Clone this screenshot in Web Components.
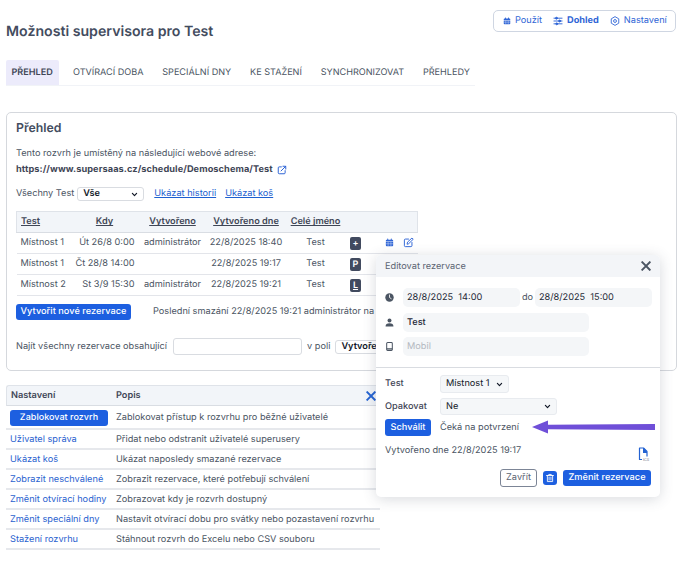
<!DOCTYPE html>
<html lang="cs"><head><meta charset="utf-8"><title>Možnosti supervisora</title>
<style>
html,body{margin:0;padding:0;background:#fff}
body{width:682px;height:566px;overflow:hidden;font:9.2px/1.2 Inter,"Liberation Sans",sans-serif;color:#4b5563;position:relative;text-rendering:geometricPrecision}
</style></head><body>
<sv-page></sv-page>
<script>
const IC={
cal:'<svg viewBox="0 0 16 16" width="W" height="W" fill="currentColor"><rect x="4" y="1" width="1.8" height="3" rx=".6"/><rect x="10.2" y="1" width="1.8" height="3" rx=".6"/><path d="M3 3h10a1.5 1.5 0 0 1 1.5 1.5V6h-13V4.500A1.500 1.500 0 0 1 3 3z"/><path d="M1.500 7h13v6A1.500 1.500 0 0 1 13 14.500H3A1.500 1.500 0 0 1 1.500 13z"/><path d="M1.500 10.300h13" stroke="#fff" stroke-width=".7"/><path d="M5.500 7v7.500M10.500 7v7.500" stroke="#fff" stroke-width=".7"/></svg>',
sliders:'<svg viewBox="0 0 16 16" width="W" height="W" fill="none" stroke="currentColor" stroke-width="1.500" stroke-linecap="round"><path d="M1.500 3.500h13M1.500 8h13M1.500 12.500h13"/><circle cx="5.500" cy="3.500" r="1.500" fill="currentColor"/><circle cx="10.500" cy="8" r="1.500" fill="currentColor"/><circle cx="6" cy="12.500" r="1.500" fill="currentColor"/></svg>',
gear:'<svg viewBox="0 0 16 16" width="W" height="W" fill="none" stroke="currentColor" stroke-width="1.400"><path d="M8 1l6 3.500v7L8 15l-6-3.500v-7z" stroke-linejoin="round"/><circle cx="8" cy="8" r="2.300"/></svg>',
ext:'<svg viewBox="0 0 16 16" width="W" height="W" fill="none" stroke="currentColor" stroke-width="1.600" stroke-linecap="round" stroke-linejoin="round"><path d="M7 3H3.500A1.500 1.500 0 0 0 2 4.500v8A1.500 1.500 0 0 0 3.500 14h8a1.500 1.500 0 0 0 1.500-1.500V9"/><path d="M6.500 9.500L14 2M9.500 2H14v4.500"/></svg>',
edit:'<svg viewBox="0 0 16 16" width="W" height="W" fill="none" stroke="currentColor" stroke-width="1.400" stroke-linecap="round" stroke-linejoin="round"><path d="M8 3H3.500A1.500 1.500 0 0 0 2 4.500v8A1.500 1.500 0 0 0 3.500 14h8a1.500 1.500 0 0 0 1.500-1.500V8"/><path d="M6 10l.6-2.600L13 1.500 14.800 3.300 8.600 9.400z"/></svg>',
clock:'<svg viewBox="0 0 16 16" width="W" height="W"><circle cx="8" cy="8" r="7.500" fill="currentColor"/><path d="M8 3.500V8l3 2" fill="none" stroke="#fff" stroke-width="1.500" stroke-linecap="round"/></svg>',
user:'<svg viewBox="0 0 16 16" width="W" height="W" fill="currentColor"><circle cx="8" cy="4.300" r="3.500"/><path d="M1 15c0-4 2.500-5.800 7-5.800s7 1.800 7 5.800z"/></svg>',
phone:'<svg viewBox="0 0 16 16" width="W" height="W" fill="none" stroke="currentColor" stroke-width="1.800"><rect x="3" y="1" width="10" height="14" rx="1.600"/><path d="M3 12.300h10" stroke-width="2.400"/></svg>',
trash:'<svg viewBox="0 0 16 16" width="W" height="W" fill="none" stroke="currentColor" stroke-width="1.400" stroke-linecap="round"><path d="M2.500 4h11M6 4V2.300h4V4M3.800 4v9.700h8.400V4M6.500 6.500v4.800M9.500 6.500v4.800"/></svg>',
x:'<svg viewBox="0 0 12 12" width="W" height="W" fill="none" stroke="currentColor" stroke-width="2.300" stroke-linecap="square"><path d="M1.500 1.500l9 9M10.500 1.500l-9 9"/></svg>',
chev:'<svg viewBox="0 0 10 10" width="W" height="W" fill="none" stroke="currentColor" stroke-width="1.700" stroke-linecap="round" stroke-linejoin="round"><path d="M2 3.500l3 3 3-3"/></svg>'
};
class SvIcon extends HTMLElement{connectedCallback(){
 const s=this.getAttribute('size')||'10';
 this.attachShadow({mode:'open'}).innerHTML=`<style>:host{display:inline-flex;flex:none;line-height:0;vertical-align:middle}</style>`+IC[this.getAttribute('name')].replace(/W/g,s);
}}
customElements.define('sv-icon',SvIcon);

class SvSelect extends HTMLElement{connectedCallback(){
 const w=this.getAttribute('w')||'69';
 this.attachShadow({mode:'open'}).innerHTML=`<style>:host{display:inline-flex;align-items:center;justify-content:space-between;box-sizing:border-box;width:${w}px;height:${this.getAttribute('h')||14}px;padding:0 5px;border:1px solid #d9dce1;border-radius:3px;background:#fff;color:#111827;font-size:9.2px;flex:none;white-space:nowrap}
 :host([tint]){background:#f5f7f9;border-color:#e8ebef}</style><slot></slot><sv-icon name="chev" size="7"></sv-icon>`;
}}
customElements.define('sv-select',SvSelect);

class SvField extends HTMLElement{connectedCallback(){
 this.attachShadow({mode:'open'}).innerHTML=`<style>:host{display:flex;align-items:center;box-sizing:border-box;height:19px;padding:1px 4px 0;background:#f4f6f8;border-radius:5px;color:#1f2937;font-size:9.2px;white-space:pre}
 :host([ph]){color:#b3b8c0}</style><slot></slot>`;
}}
customElements.define('sv-field',SvField);

class SvButton extends HTMLElement{connectedCallback(){
 this.attachShadow({mode:'open'}).innerHTML=`<style>:host{display:inline-flex;align-items:center;justify-content:center;box-sizing:border-box;height:16px;padding:0 2px;background:#1d5fe0;color:#fff;border-radius:3px;font-weight:500;font-size:9.2px;letter-spacing:.03px;white-space:nowrap;flex:none}</style><slot></slot>`;
}}
customElements.define('sv-button',SvButton);

class SvHeader extends HTMLElement{connectedCallback(){
 this.attachShadow({mode:'open'}).innerHTML=`<style>
 :host{display:flex;justify-content:space-between;align-items:flex-start;height:60px;padding:10px 6px 0 6px;box-sizing:border-box}
 h1{margin:13px 0 0;font-size:14.150px;line-height:17px;font-weight:600;color:#434c5e;white-space:nowrap}
 nav{display:flex;align-items:center;gap:11px;box-sizing:border-box;width:183px;height:22px;padding:0 9px;border:1px solid #cfd6e2;border-radius:5px;color:#2f65d6;font-size:9.200px}
 span{display:inline-flex;align-items:center;gap:4px}b{font-weight:700}
 </style><h1>Možnosti supervisora pro Test</h1>
 <nav><span><sv-icon name="cal" size="8"></sv-icon>Použít</span><span><sv-icon name="sliders" size="10"></sv-icon><b>Dohled</b></span><span><sv-icon name="gear" size="10"></sv-icon>Nastavení</span></nav>`;
}}
customElements.define('sv-header',SvHeader);

class SvTabs extends HTMLElement{connectedCallback(){
 const t=['PŘEHLED','OTVÍRACÍ DOBA','SPECIÁLNÍ DNY','KE STAŽENÍ','SYNCHRONIZOVAT','PŘEHLEDY'];
 this.attachShadow({mode:'open'}).innerHTML=`<style>
 :host{display:flex;margin:0 0 0 6px;width:469px;height:25px;border-bottom:1px solid #f1f3f7;box-sizing:content-box;color:#4b5563;font-size:9.100px}
 div{display:flex;align-items:center;padding:2px 9.400px 0;white-space:nowrap}
 div.a{background:#ecebfb;color:#3f4656;font-weight:600;border-radius:2px 2px 0 0;padding:2px 6px 0 5.500px;margin-right:4.800px}
 </style>`+t.map((x,i)=>`<div class="${i?'':'a'}">${x}</div>`).join('');
}}
customElements.define('sv-tabs',SvTabs);

class SvBookings extends HTMLElement{connectedCallback(){
 const rows=[['Místnost 1','Út 26/8 0:00','administrátor','22/8/2025 18:40','Test','+',1],['Místnost 1','Čt 28/8 14:00','','22/8/2025 19:17','Test','P',0],['Místnost 2','St 3/9 15:30','administrátor','22/8/2025 19:21','Test','L',0]];
 this.attachShadow({mode:'open'}).innerHTML=`<style>
 :host{display:block;width:401px}
 table{border-collapse:collapse;table-layout:fixed;width:401px;font-size:9.200px;color:#4b5563}
 th{height:20px;padding:0;background:#f2f5f9;border-top:1px solid #dfe3e9;border-bottom:1px solid #d9dde3;font-weight:600;color:#3f4656;text-decoration:underline}
 th:first-child{border-left:1px solid #dfe3e9;text-align:left;padding-left:4px}
 th:last-child{border-right:1px solid #dfe3e9}
 td{height:20px;padding:0;text-align:center;border-bottom:1px solid #e3e5ea;white-space:nowrap}
 td.l{text-align:left;padding-left:4px}td.r{text-align:right;padding-right:4px}
 td.c{text-align:right;padding-right:5px}
 i{display:inline-flex;width:11px;height:13px;align-items:center;justify-content:center;background:#414a5f;color:#fff;border-radius:2px;font:600 9px/1 Inter,sans-serif;font-style:normal;vertical-align:middle}
 i.u{text-decoration:underline}
 sv-icon{color:#2f65d6}
 </style><table><colgroup><col style="width:54px"><col style="width:68px"><col style="width:68px"><col style="width:79px"><col style="width:60px"><col style="width:20px"><col style="width:33px"><col style="width:19px"></colgroup>
 <thead><tr><th>Test</th><th>Kdy</th><th>Vytvořeno</th><th>Vytvořeno dne</th><th>Celé jméno</th><th></th><th></th><th></th></tr></thead>
 <tbody>`+rows.map(r=>`<tr><td class="l">${r[0]}</td><td class="r">${r[1]}</td><td>${r[2]}</td><td>${r[3]}</td><td>${r[4]}</td><td><i class="${r[5]=='L'?'u':''}">${r[5]}</i></td><td class="c">${r[6]?'<sv-icon name="cal" size="9"></sv-icon>':''}</td><td>${r[6]?'<sv-icon name="edit" size="11"></sv-icon>':''}</td></tr>`).join('')+`</tbody></table>`;
}}
customElements.define('sv-bookings',SvBookings);

class SvOverview extends HTMLElement{connectedCallback(){
 this.attachShadow({mode:'open'}).innerHTML=`<style>
 :host{display:block;box-sizing:border-box;margin:26px 5px 0 6px;height:259px;border:1px solid #d5d8dd;border-radius:5px;padding:0 9px;color:#4b5563;font-size:9.200px}
 h2{margin:7px 0 0;font-size:12.300px;line-height:15px;font-weight:600;color:#434c5e}
 p{margin:0;white-space:nowrap}
 .p1{margin-top:13px;line-height:12px}
 .url{margin-top:4px;line-height:12px;font-weight:700;color:#3f4656;display:flex;align-items:center;gap:4px;letter-spacing:.09px}
 .url sv-icon{color:#2f65d6}
 .f{display:flex;align-items:center;margin-top:11px;height:14px}
 .f span{margin-right:3px}
 a{color:#1d5fd0;text-decoration:underline}
 sv-select{margin-right:10px;font-weight:600}
 sv-bookings{margin-top:10px}
 .b{display:flex;align-items:center;margin-top:8px;height:16px}
 .b sv-button{width:115px}
 .b span{margin-left:22px;white-space:nowrap}
 .s{display:flex;align-items:center;margin-top:18px;height:17px;white-space:nowrap}
 .s u{display:block;text-decoration:none;width:129px;height:17px;box-sizing:border-box;border:1px solid #d9dce1;border-radius:3px;margin:0 5px 0 6px}
 .s sv-select{margin:0 0 0 5px}
 </style><h2>Přehled</h2>
 <p class="p1">Tento rozvrh je umístěný na následující webové adrese:</p>
 <p class="url">https://www.supersaas.cz/schedule/Demoschema/Test <sv-icon name="ext" size="10"></sv-icon></p>
 <div class="f"><span>Všechny Test</span><sv-select w="67">Vše</sv-select><a>Ukázat historii</a><a style="margin-left:9px">Ukázat koš</a></div>
 <sv-bookings></sv-bookings>
 <div class="b"><sv-button>Vytvořit nové rezervace</sv-button><span>Poslední smazání 22/8/2025 19:21 administrátor na</span></div>
 <div class="s">Najít všechny rezervace obsahující<u></u>v poli<sv-select w="80">Vytvořeno</sv-select></div>`;
}}
customElements.define('sv-overview',SvOverview);

class SvSettings extends HTMLElement{connectedCallback(){
 const r=[['Zablokovat rozvrh','Zablokovat přístup k rozvrhu pro běžné uživatelé',1],['Uživatel správa','Přidat nebo odstranit uživatelé superusery'],['Ukázat koš','Ukázat naposledy smazané rezervace'],['Zobrazit neschválené','Zobrazit rezervace, které potřebují schválení'],['Změnit otvírací hodiny','Zobrazovat kdy je rozvrh dostupný'],['Změnit speciální dny','Nastavit otvírací dobu pro svátky nebo pozastavení rozvrhu'],['Stažení rozvrhu','Stáhnout rozvrh do Excelu nebo CSV souboru']];
 this.attachShadow({mode:'open'}).innerHTML=`<style>
 :host{display:block;width:374px;margin:14px 0 0 6px;font-size:9.200px;color:#4b5563}
 .h{display:flex;align-items:center;height:21px;box-sizing:border-box;padding-top:1px;background:#f2f5f9;border:1px solid #dfe3e9;border-bottom-color:#d9dde3;border-right:0;border-radius:3px 0 0 0;font-weight:600;color:#3f4656;padding-left:4px}
 .h span:first-child{width:105px}.h span:nth-child(2){flex:1}
 .h sv-icon{color:#2463d2;margin-right:4px}
 .r{display:flex;align-items:center;height:20px;box-sizing:border-box;padding-top:2px;border-bottom:2px solid #e6e8ec;white-space:nowrap}
 .r.t{height:24px;padding-top:2px}
 .r a{width:106px;padding-left:4px;box-sizing:content-box;color:#2a62cf;flex:none}
 .r a.bt{width:110px;padding:0;display:flex}
 sv-button{width:98px;margin-left:4px;font-size:9px;padding-top:1px}
 </style><div class="h"><span>Nastavení</span><span>Popis</span><sv-icon name="x" size="10"></sv-icon></div>`+
 r.map(x=>`<div class="r ${x[2]?'t':''}">${x[2]?`<a class="bt"><sv-button>${x[0]}</sv-button></a>`:`<a>${x[0]}</a>`}<span>${x[1]}</span></div>`).join('');
}}
customElements.define('sv-settings',SvSettings);

class SvModal extends HTMLElement{connectedCallback(){
 this.attachShadow({mode:'open'}).innerHTML=`<style>
 :host{position:absolute;left:376px;top:255px;width:284px;height:242px;background:#fff;border-radius:5px;box-shadow:0 2px 14px rgba(60,70,90,.2);font-size:9.200px;color:#4b5563}
 .top{display:flex;align-items:center;justify-content:space-between;box-sizing:border-box;height:22px;padding:1px 9px 0;background:#f3f5f8;border-radius:5px 5px 0 0;color:#5b6472}
 .top sv-icon{color:#4b5563;margin-top:-1px}
 .g{padding:11px 8px 0 9px;height:91px;box-sizing:border-box;border-bottom:1px solid #d9dce1}
 .ln{display:flex;align-items:center;height:19px;margin-bottom:5.500px}
 .ln>sv-icon{width:18px;color:#4b5563}
 .d{width:117px}.do{width:15px;text-align:center;white-space:nowrap}
 .w{width:186px}
 .b{font-weight:500}
 .row{display:flex;align-items:center;padding-left:9px;white-space:nowrap}
 .lab{width:55px;color:#3f4656;font-weight:500}
 .foot{display:flex;align-items:flex-start;justify-content:flex-end;gap:6px;padding-right:9px}
 .z{display:flex;align-items:center;justify-content:center;box-sizing:border-box;width:37px;height:18px;border:1px solid #7c8596;border-radius:3px;color:#5b6472}
 .tr{display:flex;align-items:center;justify-content:center;width:14px;height:14px;margin-top:2px;background:#1d5fe0;color:#fff;border-radius:3px}
 .ics{position:absolute;left:262px;top:192px;color:#2463d2}
 sv-button.big{height:16px;width:88px;margin-top:1px}
 </style>
 <div class="top"><span>Editovat rezervace</span><sv-icon name="x" size="10"></sv-icon></div>
 <div class="g">
  <div class="ln"><sv-icon name="clock" size="9"></sv-icon><sv-field class="d">28/8/2025  14:00</sv-field><span class="do">do</span><sv-field class="d">28/8/2025  15:00</sv-field></div>
  <div class="ln"><sv-icon name="user" size="9"></sv-icon><sv-field class="w b">Test</sv-field></div>
  <div class="ln"><sv-icon name="phone" size="9"></sv-icon><sv-field class="w" ph>Mobil</sv-field></div>
 </div>
 <div class="row" style="margin-top:7px"><span class="lab">Test</span><sv-select w="69" h="18" tint>Místnost 1</sv-select></div>
 <div class="row" style="margin-top:5px"><span class="lab">Opakovat</span><sv-select w="117" h="17" tint>Ne</sv-select></div>
 <div class="row" style="margin-top:4px"><sv-button style="width:46px;height:17px">Schválit</sv-button><span style="margin-left:9px">Čeká na potvrzení</span></div>
 <div class="row" style="margin-top:9px;height:12px">Vytvořeno dne 22/8/2025 19:17</div>
 <svg class="ics" width="14" height="14" viewBox="0 0 14 14"><path d="M1.500 1h4l3.500 3.500v8h-7.500z" fill="#fff" stroke="currentColor" stroke-width="1.200" stroke-linejoin="round"/><path d="M5 1h1l3 3.500v1.500h-4z" fill="currentColor"/><rect x="4" y="9.500" width="10" height="4.500" fill="#fff"/><text x="5" y="13.500" font-size="3.800" font-family="Inter" fill="#6b7280">ICS</text></svg>
 <div class="foot" style="margin-top:12px"><div class="z">Zavřít</div><div class="tr"><sv-icon name="trash" size="10"></sv-icon></div><sv-button class="big">Změnit rezervace</sv-button></div>
 <svg style="position:absolute;left:156px;top:165px" width="125" height="14" viewBox="0 0 125 14"><path d="M0 7L16 .5v4.300l107-.8v6l-107-.8v4.300z" fill="#6f4fd8"/></svg>`;
}}
customElements.define('sv-modal',SvModal);

class SvPage extends HTMLElement{connectedCallback(){
 this.attachShadow({mode:'open'}).innerHTML=`<style>:host{display:block;width:682px;height:566px;position:relative}</style>
 <sv-header></sv-header><sv-tabs></sv-tabs><sv-overview></sv-overview><sv-settings></sv-settings><sv-modal></sv-modal>`;
}}
customElements.define('sv-page',SvPage);
</script></body></html>
